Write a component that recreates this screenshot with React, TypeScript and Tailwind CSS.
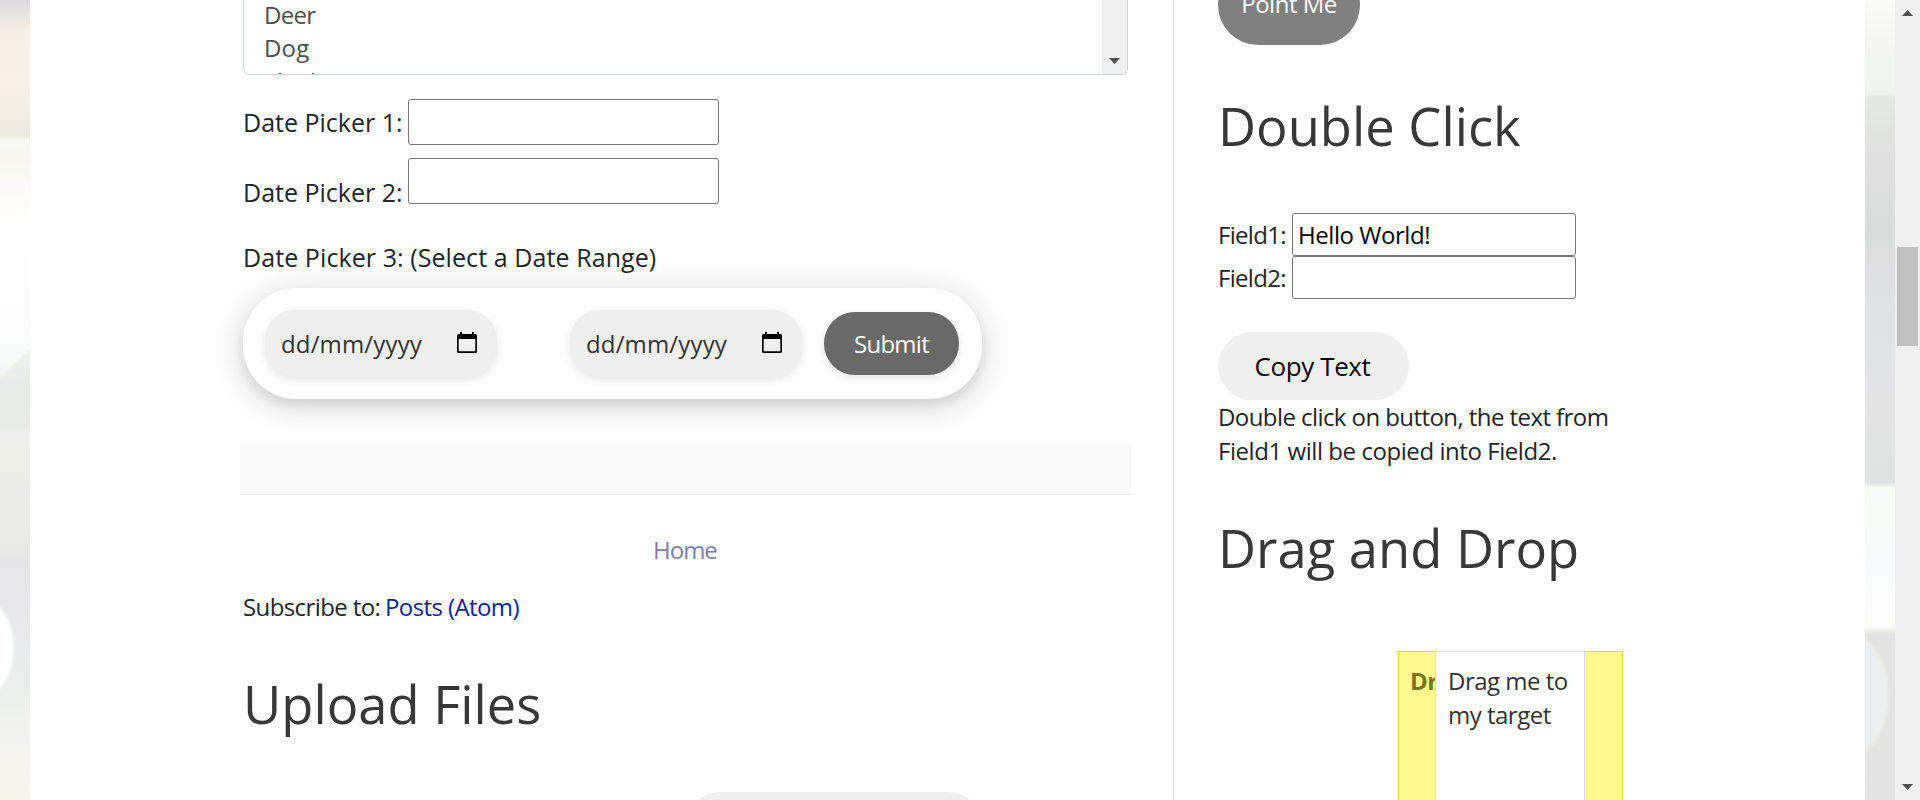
import type { ReactNode } from "react";

function LeftPhoto() {
  return (
    <svg width="30" height="800" viewBox="0 0 30 800" className="shrink-0">
      <defs>
        <linearGradient id="lp" x1="0" y1="0" x2="0" y2="1">
          <stop offset="0" stopColor="#dadbe0" />
          <stop offset="0.015" stopColor="#e4e2e2" />
          <stop offset="0.035" stopColor="#f6eee4" />
          <stop offset="0.1" stopColor="#f9f1e5" />
          <stop offset="0.15" stopColor="#f2ece2" />
          <stop offset="0.171" stopColor="#eeebe2" />
          <stop offset="0.174" stopColor="#faf6f2" />
          <stop offset="0.2" stopColor="#fbf7ee" />
          <stop offset="0.23" stopColor="#fdfbf8" />
          <stop offset="0.28" stopColor="#ffffff" />
          <stop offset="0.4" stopColor="#fdfdfd" />
          <stop offset="0.45" stopColor="#f9fafa" />
          <stop offset="0.48" stopColor="#eeefec" />
          <stop offset="0.56" stopColor="#edeee8" />
          <stop offset="0.66" stopColor="#ebece7" />
          <stop offset="0.71" stopColor="#e6e6e8" />
          <stop offset="0.78" stopColor="#e9e9eb" />
          <stop offset="0.86" stopColor="#eceeed" />
          <stop offset="0.93" stopColor="#f3f4ef" />
          <stop offset="1" stopColor="#f6f4ea" />
        </linearGradient>
        <filter id="soft" x="-50%" y="-50%" width="200%" height="200%">
          <feGaussianBlur stdDeviation="1.5" />
        </filter>
      </defs>
      <rect width="30" height="800" fill="url(#lp)" />
      <path d="M34 345L-4 382V430L34 430Z" fill="#e9ebe6" opacity="0.7" filter="url(#soft)" />
      <ellipse cx="-14" cy="648" rx="28" ry="46" fill="#ffffff" stroke="#e8f3e8" filter="url(#soft)" />
    </svg>
  );
}

function RightPhoto() {
  return (
    <svg width="30" height="800" viewBox="0 0 30 800" className="shrink-0">
      <defs>
        <linearGradient id="rp" x1="0" y1="0" x2="0" y2="1">
          <stop offset="0" stopColor="#fcfcfb" />
          <stop offset="0.06" stopColor="#f4f5f0" />
          <stop offset="0.117" stopColor="#f1f4ee" />
          <stop offset="0.121" stopColor="#e6e8e5" />
          <stop offset="0.2" stopColor="#dfe0df" />
          <stop offset="0.29" stopColor="#dadbdb" />
          <stop offset="0.32" stopColor="#dededf" />
          <stop offset="0.4" stopColor="#e1e2e6" />
          <stop offset="0.5" stopColor="#e4e4e5" />
          <stop offset="0.603" stopColor="#e1e2e2" />
          <stop offset="0.61" stopColor="#f9fcf8" />
          <stop offset="0.7" stopColor="#fafbfc" />
          <stop offset="0.782" stopColor="#fdfdfc" />
          <stop offset="0.788" stopColor="#efefe8" />
          <stop offset="0.793" stopColor="#e3e3e4" />
          <stop offset="1" stopColor="#e4e4e4" />
        </linearGradient>
      </defs>
      <rect width="30" height="800" fill="url(#rp)" />
      <ellipse cx="-14" cy="695" rx="37" ry="60" fill="#eeeff0" stroke="#ecede6" strokeWidth="2" filter="url(#soft)" />
    </svg>
  );
}

function CalendarIcon() {
  return (
    <svg width="20" height="21" viewBox="0 0 20 21" className="shrink-0">
      <path
        fillRule="evenodd"
        d="M3 0h2v2h10V0h2v2h1.500a1.500 1.500 0 0 1 1.500 1.500V19.500a1.500 1.500 0 0 1-1.500 1.500H1.500A1.500 1.500 0 0 1 0 19.500V3.500A1.500 1.500 0 0 1 1.500 2H3ZM1.700 7V19.300H18.300V7Z"
        fill="#000"
      />
    </svg>
  );
}

function DateInput() {
  return (
    <div className="flex h-[67px] w-[232px] items-center rounded-[30px] bg-[#efefef] pr-[20px] pl-[16px] shadow-[0_3px_8px_rgba(0,0,0,0.1)]">
      <span className="flex-1 text-[24px] leading-[34px] tracking-[0.15px] text-[#333]">dd/mm/yyyy</span>
      <div className="pb-[2px]">
        <CalendarIcon />
      </div>
    </div>
  );
}

function Heading({ children }: { children: ReactNode }) {
  return <h2 className="text-[52.5px] leading-[60px] text-[#383838]">{children}</h2>;
}

function Arrow({ up }: { up?: boolean }) {
  return (
    <svg width="11" height="6" viewBox="0 0 11 6">
      <path d={up ? "M5.500 0L11 6H0Z" : "M0 0H11L5.500 6Z"} fill="#505050" />
    </svg>
  );
}

export default function App() {
  return (
    <div className="flex h-[800px] w-[1920px] overflow-hidden bg-white font-['Open_Sans','Noto_Sans',sans-serif] whitespace-nowrap text-[#212529]">
      <LeftPhoto />

      <main className="h-[800px] w-[1143px] shrink-0 pr-[44px] pl-[213px]">
        <div className="flex h-[75px] w-[885px] justify-between overflow-hidden rounded-b-[6px] border border-t-0 border-[#ced4da]">
          <ul className="-mt-[2px] pl-[20px] text-[24px] leading-[33px] text-[#495057]">
            <li className="tracking-[-0.7px]">Deer</li>
            <li className="tracking-[0.2px]">Dog</li>
            <li className="pt-[1px] tracking-[-0.4px]">Elephant</li>
          </ul>
          <div className="flex w-[25px] items-end justify-center bg-[#f0f0f0] pb-[10px]">
            <Arrow />
          </div>
        </div>

        <div className="mt-[24px] flex items-start text-[25px] leading-[46px]">
          <label className="w-[165px]">Date Picker 1:</label>
          <input className="h-[46px] w-[311px] rounded-[3px] border border-[#767676]" />
        </div>
        <div className="mt-[13px] flex items-start text-[25px] leading-[46px]">
          <label className="mt-[11px] w-[165px]">Date Picker 2:</label>
          <input className="h-[46px] w-[311px] rounded-[3px] border border-[#767676]" />
        </div>
        <p className="mt-[24px] text-[25px] leading-[36px] tracking-[0.08px]">Date Picker 3: (Select a Date Range)</p>

        <div className="mt-[13px] flex h-[111px] w-[739px] items-center rounded-[53px] bg-white pl-[22px] shadow-[0_6px_30px_rgba(0,0,0,0.2),0_6px_12px_rgba(0,0,0,0.05)]">
          <DateInput />
          <div className="ml-[73px]">
            <DateInput />
          </div>
          <button className="ml-[22px] h-[63px] w-[135px] rounded-[31px] bg-[#696969] text-[24px] tracking-[-0.75px] text-white shadow-[0_3px_8px_rgba(0,0,0,0.1)]">
            Submit
          </button>
        </div>

        <div className="mt-[45px] -ml-[3px] h-[51px] w-[891px] border-b border-[#eee] bg-[#fafafa]" />

        <div className="mt-[38px] pl-[410px] text-[24px] leading-[34px] tracking-[-1px] text-[#7d80ab]">Home</div>
        <div className="mt-[23px] flex text-[24px] leading-[34px] tracking-[-0.6px]">
          <span className="w-[142px]">Subscribe to:</span>
          <a className="text-[#0a2596]">Posts (Atom)</a>
        </div>
        <div className="mt-[50px]">
          <Heading>Upload Files</Heading>
        </div>
        <div className="mt-[58px] ml-[443px] h-[68px] w-[296px] rounded-full bg-[#efefef]" />
      </main>

      <aside className="h-[800px] w-[692px] shrink-0 border-l border-[#ddd] pl-[44px] text-[24px] leading-[34px] tracking-[-0.5px]">
        <button className="-mt-[35px] block h-[80px] w-[142px] rounded-[40px] bg-[#808080] pb-[3px] text-white">Point Me</button>
        <div className="mt-[51px] tracking-normal">
          <Heading>Double Click</Heading>
        </div>
        <div className="mt-[57px] flex leading-[43px]">
          <label className="w-[74px] tracking-[-0.7px]">Field1:</label>
          <input
            defaultValue="Hello World!"
            className="h-[43px] w-[284px] rounded-[3px] border border-[#767676] pl-[5px] tracking-[-0.45px] text-black"
          />
        </div>
        <div className="flex leading-[43px]">
          <label className="w-[74px] tracking-[-0.7px]">Field2:</label>
          <input className="h-[43px] w-[284px] rounded-[3px] border border-[#767676]" />
        </div>
        <button className="mt-[33px] block h-[68px] w-[191px] rounded-full bg-[#efefef] pr-[2px] text-[26px] tracking-[-0.4px] text-black">
          Copy Text
        </button>
        <p className="tracking-[-0.57px]">
          Double click on button, the text from
          <br />
          <span className="tracking-[-0.44px]">Field1 will be copied into Field2.</span>
        </p>
        <div className="mt-[50px] tracking-normal">
          <Heading>Drag and Drop</Heading>
        </div>
        <div className="relative mt-[73px] ml-[180px] h-[225px] w-[225px] border border-[#dad55e] bg-[#fffa90] pt-[12px] pl-[11px] leading-[33.5px] font-bold text-[#777620]">
          Dr
          <div className="absolute -top-px left-[36px] h-[150px] w-[150px] border border-[#ddd] bg-white pt-[12px] pl-[12px] font-normal text-[#333]">
            Drag me to
            <br />
            my target
          </div>
        </div>
      </aside>

      <RightPhoto />

      <div className="flex h-[800px] w-[25px] shrink-0 flex-col items-center bg-[#f0f0f0] pt-[10px] pb-[10px]">
        <Arrow up />
        <div className="mt-[231px] h-[99px] w-[21px] bg-[#c1c1c1]" />
        <div className="mt-auto">
          <Arrow />
        </div>
      </div>
    </div>
  );
}
